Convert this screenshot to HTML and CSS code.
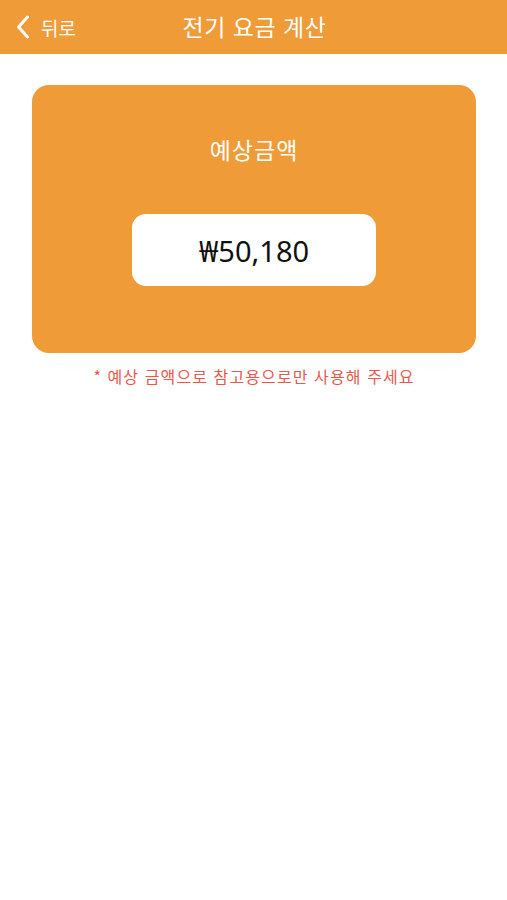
FILE: index.html
```html
<!DOCTYPE html>
<html lang="ko">
<head>
<meta charset="utf-8">
<link rel="stylesheet" href="styles.css">
</head>
<body>
<header class="nav">
  <div class="back">
    <svg class="chev" width="14" height="24" viewBox="0 0 14 24"><path d="M11.5 2 L2.5 12 L11.5 22" fill="none" stroke="#fff" stroke-width="3" stroke-linecap="round" stroke-linejoin="round"/></svg>
    <span>뒤로</span>
  </div>
  <h1 class="title">전기 요금 계산</h1>
</header>
<main class="content">
  <section class="card">
    <div class="label">예상금액</div>
    <div class="amount-box">₩50,180</div>
  </section>
  <p class="note">* 예상 금액으로 참고용으로만 사용해 주세요</p>
</main>
</body>
</html>
```
FILE: styles.css
```css
* { box-sizing: border-box; }
body {
  margin: 0;
  font-family: "Noto Sans CJK KR", "Noto Sans", sans-serif;
  background: #fff;
}
.nav {
  position: relative;
  height: 54px;
  background: #EF9B38;
  display: flex;
  align-items: center;
  justify-content: center;
}
.back {
  position: absolute;
  left: 16px;
  top: 0;
  height: 54px;
  display: flex;
  align-items: center;
  gap: 11px;
  color: #fff;
  font-size: 19px;
}
.chev { display: block; }
.title {
  margin: 0 0 2px 2px;
  color: #fff;
  font-size: 23px;
  font-weight: 400;
  line-height: 1;
  letter-spacing: 0.5px;
}
.content {
  padding: 31px 31px 0 32px;
}
.card {
  background: #EF9B38;
  border-radius: 17px;
  height: 268px;
  display: flex;
  flex-direction: column;
  align-items: center;
  padding-top: 48px;
}
.label {
  color: #fff;
  font-size: 23px;
  line-height: 32px;
  letter-spacing: 1px;
}
.amount-box {
  margin-top: 49px;
  width: 244px;
  height: 72px;
  background: #fff;
  border-radius: 14px;
  display: flex;
  align-items: center;
  justify-content: center;
  font-family: "Noto Sans", "Noto Sans CJK KR", sans-serif;
  font-size: 29px;
  font-weight: 400;
  color: #111;
}
.note {
  margin: 12px 0 0;
  text-align: center;
  color: #E9584C;
  font-size: 16px;
  line-height: 22px;
  letter-spacing: 1.1px;
}
```
